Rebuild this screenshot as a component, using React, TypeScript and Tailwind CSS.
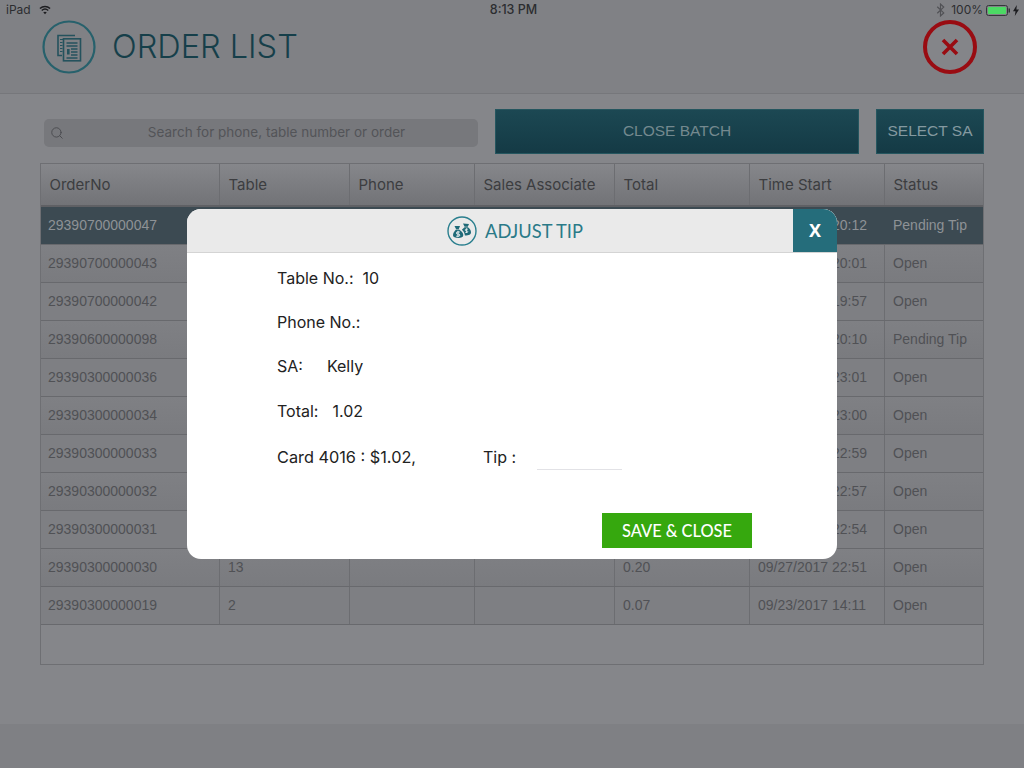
import { Search } from "lucide-react";

const rows = [
  ["29390700000047", "", "", "", "", "09/28/2017 20:12", "Pending Tip"],
  ["29390700000043", "", "", "", "", "09/28/2017 20:01", "Open"],
  ["29390700000042", "", "", "", "", "09/28/2017 19:57", "Open"],
  ["29390600000098", "", "", "", "", "09/28/2017 20:10", "Pending Tip"],
  ["29390300000036", "", "", "", "", "09/27/2017 23:01", "Open"],
  ["29390300000034", "", "", "", "", "09/27/2017 23:00", "Open"],
  ["29390300000033", "", "", "", "", "09/27/2017 22:59", "Open"],
  ["29390300000032", "", "", "", "", "09/27/2017 22:57", "Open"],
  ["29390300000031", "", "", "", "", "09/27/2017 22:54", "Open"],
  ["29390300000030", "13", "", "", "0.20", "09/27/2017 22:51", "Open"],
  ["29390300000019", "2", "", "", "0.07", "09/23/2017 14:11", "Open"],
];

const headers = ["OrderNo", "Table", "Phone", "Sales Associate", "Total", "Time Start", "Status"];
const gridCols = "grid grid-cols-[179px_130px_125px_140px_135px_135px_98px]";

function StatusBar() {
  return (
    <div className="relative flex h-5 items-center justify-between pl-[6px] pr-[5px] text-[12px] text-[#2c2d30] font-['Inter',sans-serif]">
      <div className="flex items-center gap-[8px]">
        <span>iPad</span>
        <svg width="12" height="10" viewBox="0 0 13 10" fill="none" stroke="#1c1d20" strokeWidth="1.6">
          <path d="M1 3.4C4.2 .5 8.800 .5 12 3.4" />
          <path d="M3 5.5C5 3.8 8 3.8 10 5.5" />
          <path d="M6.5 9.600 4.600 7.500C5.800 6.600 7.200 6.600 8.400 7.500Z" fill="#1c1d20" stroke="none" />
        </svg>
      </div>
      <span className="absolute left-[3px] right-0 text-center text-[12.500px] font-medium">8:13 PM</span>
      <div className="flex items-center">
        <svg width="9" height="14" viewBox="0 0 8 13" fill="none" stroke="#505155" strokeWidth="1.100">
          <path d="M1 3.5 7 9.2 4 12V1L7 3.800 1 9.500" />
        </svg>
        <span className="ml-[6px]">100%</span>
        <svg width="24" height="11" viewBox="0 0 24 11" className="ml-[3px]">
          <rect x=".5" y=".5" width="21" height="10" rx="2" fill="none" stroke="#35363a" />
          <rect x="2" y="2" width="18" height="7" rx="1" fill="#4cd964" />
          <rect x="22.500" y="3.500" width="1.500" height="4" fill="#35363a" />
        </svg>
        <svg width="6" height="11" viewBox="0 0 6 11" className="ml-[3px]">
          <path d="M3.800 0 0 6.200H2.500L1.800 11 6 4.400H3.400Z" fill="#1c1d20" />
        </svg>
      </div>
    </div>
  );
}

function DocsIcon() {
  return (
    <svg width="54" height="54" viewBox="0 0 54 54" fill="none">
      <circle cx="27" cy="27" r="25.500" stroke="#27616c" strokeWidth="2.200" />
      <path d="M33 15.500H16V35.500H20" stroke="#24525d" strokeWidth="1.600" />
      <path d="M18 19.500h10M18 22.500h2.500M18 25.500h2.500M18 28.500h2.500M18 31.500h2.500" stroke="#24525d" strokeWidth="1.200" />
      <rect x="21.500" y="18.800" width="17" height="22" fill="#808185" stroke="#24525d" strokeWidth="1.600" />
      <path d="M24.500 23h11M24.500 26h11M29 29h6.500M29 32h6.500M29 35h6.500M24.500 38h11" stroke="#24525d" strokeWidth="1.400" />
      <rect x="25" y="29" width="2.600" height="5.500" fill="#24525d" />
    </svg>
  );
}

function MoneyIcon() {
  return (
    <svg width="30" height="30" viewBox="0 0 30 30" fill="none">
      <circle cx="15" cy="15" r="14" stroke="#2a7f8e" strokeWidth="1.400" />
      <path d="M7.500 10h5.500l-1.200 3H9Z" fill="#1f6a78" />
      <path d="M9 13.500h3c2.400 1.300 4.300 3.500 4.300 5.600 0 2.200-2.200 2.900-5 2.900s-5.300-.7-5.300-2.900c0-2.100 1.700-4.300 3-5.600Z" fill="#1f6a78" />
      <path d="M16 7.500l6 .4-1.200 2.900h-3.200Z" fill="#1f6a78" />
      <path d="M17.500 11.300h3.400c1.800 1.200 3.100 3 3.100 4.900 0 2.200-1.800 3.300-6.100 3.300-.2-2.500-1.600-4.700-3-5.800Z" fill="#1f6a78" />
      <path d="M11 14.800v6M12.800 16h-2.300a1 1 0 0 0 0 2.100h1.200a1 1 0 0 1 0 2.100H9.200" stroke="#fff" strokeWidth=".9" />
      <path d="M19.500 12.300v4.500M21 13.200h-1.900a.8.8 0 0 0 0 1.700h.9a.8.8 0 0 1 0 1.600h-1.700" stroke="#fff" strokeWidth=".7" />
    </svg>
  );
}

function CloseCircle() {
  return (
    <svg width="54" height="54" viewBox="0 0 54 54" fill="none">
      <circle cx="27" cy="27" r="25" fill="#848589" stroke="#990c12" strokeWidth="4" />
      <path d="M20 20 34 34M34 20 20 34" stroke="#990c12" strokeWidth="3.600" />
    </svg>
  );
}

function OrderTable() {
  return (
    <div className="mt-[9px] ml-10 flex h-[502px] w-[944px] flex-col border border-[#6e6f73] font-['Liberation_Sans',sans-serif]">
      <div className={`${gridCols} h-[43px] shrink-0 bg-gradient-to-b from-[#86878b] to-[#727377] border-b-2 border-[#5f6064]`}>
        {headers.map((h, i) => (
          <div
            key={h}
            className={`flex items-center pl-[8.500px] pt-[2px] font-['Inter',sans-serif] text-[15px] text-[#3c3d40] ${i < 6 ? "border-r border-[#6c6d71]" : ""}`}
          >
            {h}
          </div>
        ))}
      </div>
      {rows.map((row, r) => (
        <div
          key={row[0]}
          className={`${gridCols} h-[38px] shrink-0 border-b border-[#68696d] text-[14px] ${
            r === 0
              ? "bg-[#3c4a52] text-[#8e9296]"
              : r % 2 === 1
                ? "bg-gradient-to-b from-[#7f8084] to-[#7a7b7f] text-[#505155]"
                : "bg-[#7e7f83] text-[#505155]"
          }`}
        >
          {row.map((cell, i) => (
            <div
              key={i}
              className={`flex items-center ${i === 0 ? "pl-[7px]" : "pl-2"} ${
                i < 6 && r > 0 ? "border-r border-[#6c6d71]" : ""
              }`}
            >
              {cell}
            </div>
          ))}
        </div>
      ))}
    </div>
  );
}

function AdjustTip() {
  return (
    <div className="absolute left-[187px] top-[209px] h-[350px] w-[650px] overflow-hidden rounded-[14px] bg-white font-['Inter',sans-serif] text-[16px] text-[#222]">
      <div className="relative flex h-[44px] items-center justify-center border-b border-[#d4d4d4] bg-[#eaeaea] pl-[6px]">
        <MoneyIcon />
        <span className="ml-2 mt-[2px] font-['Lato',sans-serif] text-[18.300px] text-[#2a7a88]">ADJUST TIP</span>
        <div className="absolute right-0 top-0 flex h-[43px] w-[44px] items-center justify-center bg-[#256d7b] font-['Noto_Sans',sans-serif] text-[18px] font-bold text-white">
          X
        </div>
      </div>
      <div className="flex flex-col pl-[90px]">
        <div className="mt-[15px] flex h-5 items-center">
          <span>Table No.:</span>
          <span className="ml-[9px]">10</span>
        </div>
        <div className="mt-6 flex h-5 items-center">Phone No.:</div>
        <div className="mt-6 flex h-5 items-center">
          <span>SA:</span>
          <span className="ml-6">Kelly</span>
        </div>
        <div className="mt-[25px] flex h-5 items-center">
          <span>Total:</span>
          <span className="ml-[14px]">1.02</span>
        </div>
        <div className="mt-[26px] flex h-5 items-center">
          <span className="w-[206px] text-[16.300px]">Card 4016 : $1.02,</span>
          <span>Tip :</span>
          <div className="ml-[21px] mt-[25px] h-px w-[85px] bg-[#e2e2e6]" />
        </div>
        <div className="mt-[46px] ml-[325px] flex h-[35px] w-[150px] items-center justify-center bg-[#36a80e] pt-[1px] font-['Lato',sans-serif] text-[16.400px] font-medium text-white">
          SAVE &amp; CLOSE
        </div>
      </div>
    </div>
  );
}

export default function App() {
  return (
    <div className="relative flex h-[768px] w-[1024px] flex-col overflow-hidden bg-[#85868a]">
      <header className="h-[94px] shrink-0 border-b border-[#76777b] bg-[#808185]">
        <StatusBar />
        <div className="flex items-center justify-between pl-[42px] pr-[47px]">
          <div className="flex items-center">
            <DocsIcon />
            <h1 className="ml-4 font-['Inter',sans-serif] text-[32.500px] font-light text-[#163f4a]">ORDER LIST</h1>
          </div>
          <CloseCircle />
        </div>
      </header>
      <div className="mt-[15px] flex items-start pl-[44px]">
        <div className="relative mt-[10px] flex h-7 w-[434px] items-center justify-center rounded-[5px] bg-[#77787c] pl-[31px] pb-[2px] font-['Inter',sans-serif] text-[13.500px] text-[#535458]">
          <Search className="absolute left-[6px] top-[7px] h-[14px] w-[14px] text-[#4c4d51]" strokeWidth={1.700} />
          <span>Search for phone, table number or order</span>
        </div>
        <div className="ml-[17px] flex h-[45px] w-[364px] items-center justify-center border border-[#25565f] bg-gradient-to-b from-[#1c4853] to-[#143a45] pb-[1px] font-['Liberation_Sans',sans-serif] text-[15.500px] text-[#74898f]">
          CLOSE BATCH
        </div>
        <div className="ml-[17px] flex h-[45px] w-[108px] items-center justify-center border border-[#25565f] bg-gradient-to-b from-[#1c4853] to-[#143a45] pb-[1px] font-['Liberation_Sans',sans-serif] text-[15.500px] text-[#8499a0]">
          SELECT SA
        </div>
      </div>
      <OrderTable />
      <div className="mt-auto h-11 bg-[#7f8084]" />
      <AdjustTip />
    </div>
  );
}
